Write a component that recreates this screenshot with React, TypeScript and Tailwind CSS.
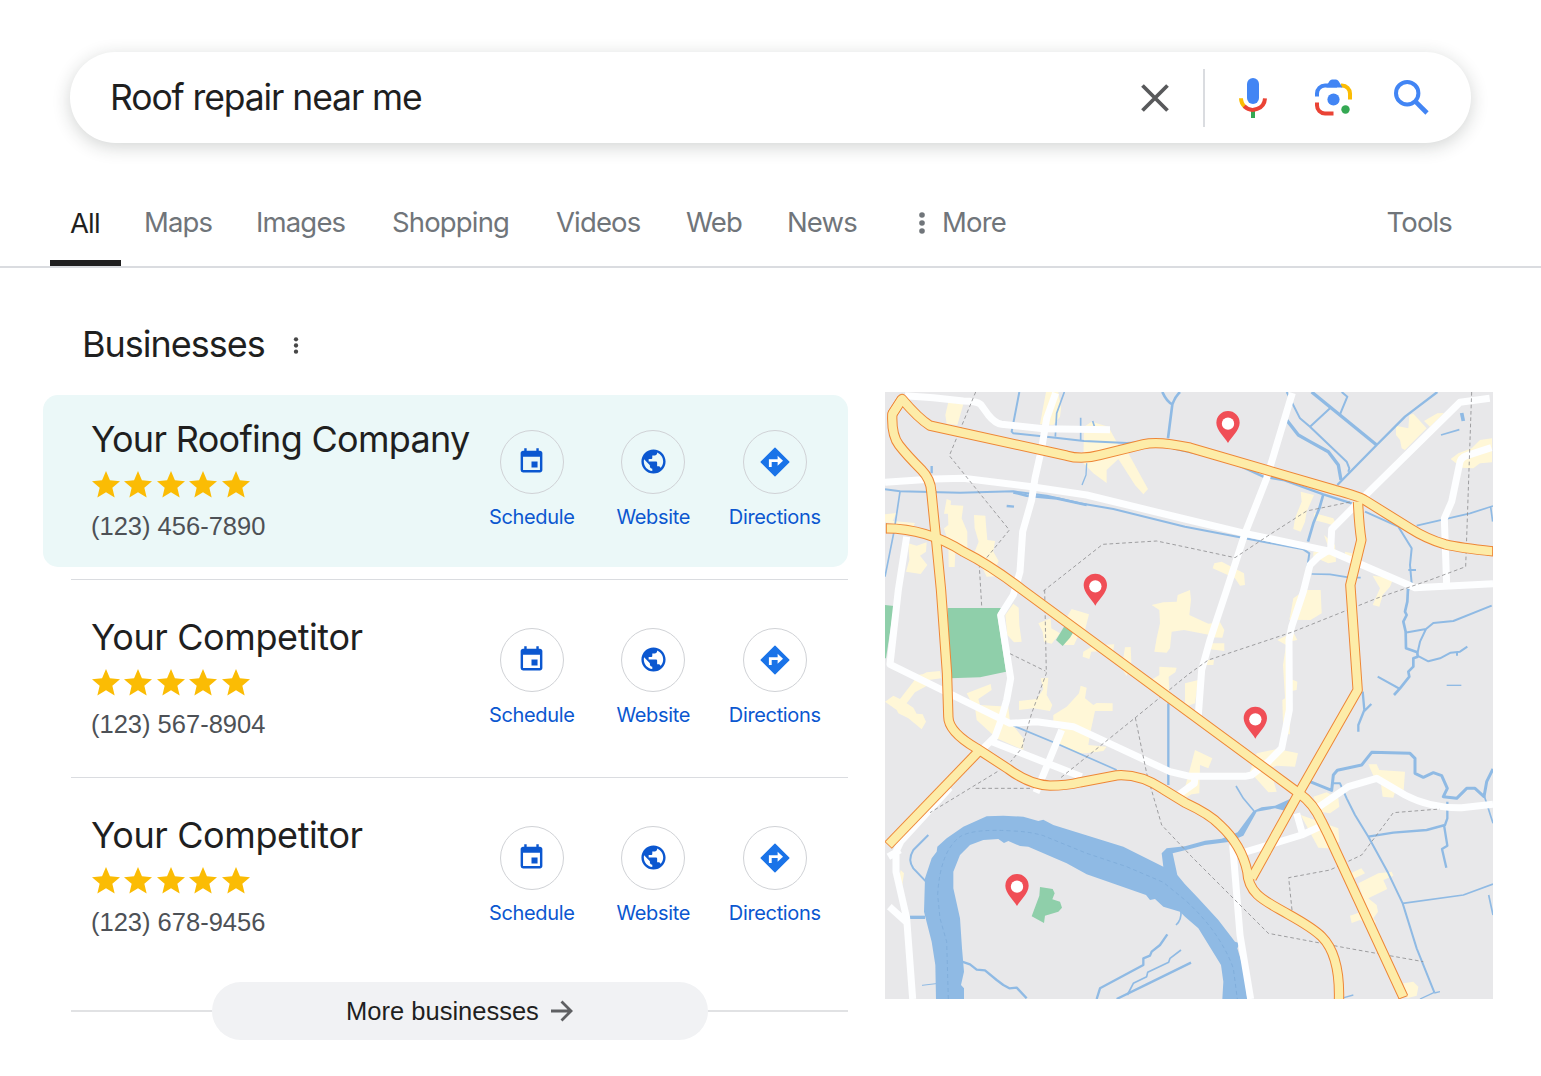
import type { ReactNode } from 'react';
import { MdEvent, MdPublic } from 'react-icons/md';

interface Business {
  name: string;
  phone: string;
  highlighted?: boolean;
}

const BUSINESSES: Business[] = [
  { name: 'Your Roofing Company', phone: '(123) 456-7890', highlighted: true },
  { name: 'Your Competitor', phone: '(123) 567-8904' },
  { name: 'Your Competitor', phone: '(123) 678-9456' },
];

const TABS = [
  { label: 'Maps', width: 'w-[112px]' },
  { label: 'Images', width: 'w-[136px]' },
  { label: 'Shopping', width: 'w-[164px]' },
  { label: 'Videos', width: 'w-[130px]' },
  { label: 'Web', width: 'w-[101px]' },
  { label: 'News', width: 'w-[132px]' },
];

export default function App() {
  return (
    <div className="w-[1541px] h-[1076px] overflow-hidden bg-white pt-[52px] font-['Inter','Liberation_Sans',sans-serif] text-[#1f1f1f]">
      <SearchBar />
      <Tabs />
      <main className="flex">
        <section className="w-[848px] pl-[43px] pt-[54px]">
          <div className="flex items-center h-[44px] pl-[39px] mb-[29px]">
            <h1 className="w-[211px] text-[36px] font-[430] tracking-[-1px] leading-[44px] whitespace-nowrap">Businesses</h1>
            <Dots className="w-[6px] h-[17px] text-[#474747] mt-[3px]" />
          </div>
          {BUSINESSES.map((b, i) => (
            <div key={i}>
              {i > 0 && <div className="h-px bg-[#dadce0] ml-7 mt-3 mb-[13px]" />}
              <BusinessRow business={b} />
            </div>
          ))}
          <div className="flex items-center ml-7 mt-[19px]">
            <div className="w-[141px] h-[2px] bg-[#e1e2e4]" />
            <button className="flex items-center justify-center gap-[11px] w-[496px] h-[58px] rounded-full bg-[#f1f2f4] font-['Liberation_Sans',sans-serif] text-[25.5px]">
              More businesses
              <svg viewBox="0 0 24 22" className="w-6 h-[22px]" fill="none" stroke="#5f6063" strokeWidth="2.8">
                <path d="M1 11h20M11.5 1.5L21 11l-9.5 9.5" />
              </svg>
            </button>
            <div className="flex-1 h-[2px] bg-[#e1e2e4]" />
          </div>
        </section>
        <div className="pl-[37px] pt-[124px]">
          <CityMap />
        </div>
      </main>
    </div>
  );
}

function SearchBar() {
  return (
    <div className="flex items-center mx-[70px] h-[91px] rounded-full bg-white pl-[40px] pr-[42px] shadow-[0_4px_18px_rgba(32,40,36,0.2)]">
      <span className="flex-1 text-[35.5px] tracking-[-1.1px] whitespace-nowrap">Roof repair near me</span>
      <svg viewBox="0 0 28 28" className="w-7 h-7" stroke="#58595b" strokeWidth="3.8">
        <path d="M1.5 1.5l25 25M26.5 1.5l-25 25" />
      </svg>
      <div className="w-[2px] h-[58px] bg-[#dadce0] ml-[34px] mr-[34px]" />
      <svg viewBox="0 0 28 40" className="w-7 h-10 mr-[48px]">
        <rect x="8" y="0" width="12" height="26" rx="6" fill="#4285f4" />
        <rect x="12" y="33" width="4" height="7" fill="#34a853" />
        <path d="M2 20.3a12 12 0 0 0 4 8.7" fill="none" stroke="#fbbc04" strokeWidth="4" />
        <path d="M5.2 28.2A12.2 12.2 0 0 0 26 20.3" fill="none" stroke="#ea4335" strokeWidth="4" />
      </svg>
      <svg viewBox="0 0 37 37" className="w-[37px] h-[37px] mr-[42px]" fill="none" strokeWidth="4">
        <path d="M2 17.5v-3a8 8 0 0 1 8-8h12" stroke="#4285f4" />
        <path d="M26 6.5h1a8 8 0 0 1 8 8v6" stroke="#fbbc04" />
        <path d="M11.5 7L14.500 2Q15.500 .5 17 .5h4q1.500 0 2.500 1.500L27.500 8.500h-16z" fill="#4285f4" />
        <path d="M2 23.5v3a8 8 0 0 0 8 8h8.500" stroke="#ea4335" />
        <circle cx="18.500" cy="20.500" r="6.100" fill="#4285f4" />
        <circle cx="30.500" cy="30.500" r="4.200" fill="#34a853" />
      </svg>
      <svg viewBox="0 0 35 35" className="w-[35px] h-[35px]" fill="none" stroke="#4285f4" strokeWidth="4">
        <circle cx="13.200" cy="13.200" r="11.200" />
        <path d="M21.800 21.800L33 33" strokeWidth="4.600" />
      </svg>
    </div>
  );
}

function Tabs() {
  return (
    <nav className="flex h-[125px] pl-[50px] pt-[52px] border-b-2 border-[#dadce0] text-[27.5px] leading-[55px] font-[430] tracking-[-0.85px] text-[#70757a]">
      <div className="flex flex-col w-[94px]">
        <span className="flex-1 pl-5 leading-[56px] text-[#1f1f1f]">All</span>
        <div className="w-[71px] h-[6px] bg-[#1f1f1f]" />
      </div>
      {TABS.map((t) => (
        <span key={t.label} className={t.width}>{t.label}</span>
      ))}
      <Dots className="w-[6px] h-[22px] mt-[17px]" />
      <span className="pl-[17px]">More</span>
      <span className="ml-auto mr-[89px]">Tools</span>
    </nav>
  );
}

function Dots({ className }: { className: string }) {
  return (
    <svg viewBox="0 0 6 22" className={className} fill="currentColor">
      <circle cx="3" cy="3" r="2.800" />
      <circle cx="3" cy="11" r="2.800" />
      <circle cx="3" cy="19" r="2.800" />
    </svg>
  );
}

function BusinessRow({ business }: { business: Business }) {
  return (
    <div className={`flex justify-between h-[172px] rounded-[15px] pl-[48px] pr-[12.5px] ${business.highlighted ? 'bg-[#ebf8f8]' : ''}`}>
      <div className="pt-[21px]">
        <h2 className={`text-[36px] leading-[46px] whitespace-nowrap ${business.highlighted ? 'tracking-[-0.7px]' : 'tracking-[-0.400px]'}`}>{business.name}</h2>
        <div className="flex gap-[4.400px] mt-[9px] pl-px">
          {[1, 2, 3, 4, 5].map((n) => (
            <svg key={n} viewBox="2 2 20 19" className="w-[28px] h-[26.600px]" fill="#fbbc04">
              <path d="M12 17.270L18.180 21l-1.640-7.030L22 9.240l-7.190-.61L12 2 9.190 8.630 2 9.240l5.460 4.730L5.820 21z" />
            </svg>
          ))}
        </div>
        <p className="mt-[12px] font-['Liberation_Sans',sans-serif] text-[25.500px] leading-[32px] text-[#4d5156]">{business.phone}</p>
      </div>
      <div className="flex pt-[34.500px]">
        <Action label="Schedule"><MdEvent size={29} /></Action>
        <Action label="Website"><MdPublic size={29} /></Action>
        <Action label="Directions"><DirectionsIcon /></Action>
      </div>
    </div>
  );
}

function Action({ label, children }: { label: string; children: ReactNode }) {
  return (
    <div className="flex flex-col items-center w-[121.500px] text-[#0b57d0]">
      <div className="flex items-center justify-center w-16 h-16 rounded-full border border-[#d0d2d6]">{children}</div>
      <span className="mt-[10px] text-[20px] leading-[26px] tracking-[-0.350px]">{label}</span>
    </div>
  );
}

function DirectionsIcon() {
  return (
    <svg viewBox="0 0 30 30" className="w-[30px] h-[30px]">
      <path d="M15 1.200L28.800 15 15 28.800 1.200 15z" fill="#1a73e8" stroke="#1a73e8" strokeWidth="1.400" strokeLinejoin="round" />
      <path d="M10.300 20v-6.300h8" fill="none" stroke="#fff" strokeWidth="2.800" />
      <path d="M17.600 8.700l5.400 5-5.400 5z" fill="#fff" />
    </svg>
  );
}

const FIELDS = [
  'M205 52L250 58L232 120L200 116L196 90Z',
  'M498 21L535 21L543 70L540 95L520 120L480 118Z',
  'M612 125L635 110L685 125L715 180L745 205L804 312L790 328L765 300L715 222L680 255V294L640 265L610 235Z',
  'M200 342L213 347L212 360L250 362L245 400L262 440L262 485L268 505L250 515L226 500L224 546H206L205 475L192 430L205 420L204 386H192Z',
  'M282 390L316 392L318 420L322 465L345 468L340 500L356 528L348 545L352 574L320 575L284 500L296 470L284 430Z',
  'M15 388L50 384L38 408L105 414L100 425L15 412Z',
  'M85 475L110 482L140 472L138 500L120 512L142 540L122 567L78 560L88 525Z',
  'M400 656L416 668L418 720L425 770L402 772L382 750L376 690Z',
  'M475 715L512 700L514 730L540 745L515 776L492 770L488 740Z',
  'M575 672L627 688L615 735L598 745L582 780L552 780L575 740L555 705Z',
  'M610 800L640 782L665 780L703 778L700 795L634 800L628 822L608 815Z',
  'M735 787L752 786L754 830L740 873L725 850Z',
  'M815 660L850 652L890 650L893 630L930 615L933 645L928 690L985 716L1020 712L1033 735L1027 758L995 757L990 750L912 735L875 740L870 790L860 803L823 800L830 760L840 715L838 675Z',
  'M838 845L890 848L886 862L866 875L868 920L805 890L838 870Z',
  'M15 950L40 932L60 942L100 890L112 870L128 868L140 862L180 858L184 880L150 884L145 900L105 922L80 955L100 968L110 986L128 988L138 1010L125 1033L85 1000L55 985L50 975Z',
  'M260 925L332 897L335 915L295 942L300 960L385 965L390 1010L430 1060L430 1095L350 1060L290 1005L286 975Z',
  'M482 880L505 878L500 930L517 960L510 978L460 970L417 975V948L470 942L490 912Z',
  'M520 990L560 965L597 925L602 902L620 908L615 940L640 960L650 954L698 955V978L645 978L632 1038L625 1080L680 1085L670 1098L618 1105L590 1105L540 1080L535 1045L545 1025L520 1010Z',
  'M1003 535L1025 530L1092 565L1095 600L1080 602L1065 580L998 550Z',
  'M1262 320L1302 330L1280 380L1275 410L1262 440L1240 432L1245 400L1265 350Z',
  'M1302 384L1360 400L1372 425L1340 415L1302 405Z',
  'M1332 450L1365 480L1368 530L1345 535L1300 515L1300 500L1350 500Z',
  'M1395 500L1440 510L1430 525L1395 520Z',
  'M1478 572L1540 580L1530 605L1508 630L1498 665L1478 660L1500 610Z',
  'M1548 122L1585 130L1588 90L1600 86L1640 130L1575 195L1565 190L1560 165L1548 150Z',
  'M1632 108L1672 85L1692 84L1650 125Z',
  'M1712 222L1735 205L1775 190L1800 165L1836 160V232L1800 235L1780 250L1745 248Z',
  'M1275 615L1322 615L1325 685L1292 705L1228 704L1232 685L1240 640Z',
  'M1192 765L1240 742L1252 765L1225 770L1228 880L1252 890L1250 915L1225 920L1230 1048L1210 1048L1207 945L1215 940L1209 840L1218 780Z',
  'M985 775L1033 775V798L985 792Z',
  'M970 825L1002 825L1000 840L968 840Z',
  'M915 895L955 885L945 955L915 965Z',
  'M1130 1105L1192 1092L1254 1105L1245 1145L1190 1142L1170 1150L1190 1220L1165 1222L1110 1160Z',
  'M945 1095L997 1120L985 1150L960 1140L958 1225L935 1228L905 1245Z',
  'M1465 1138L1490 1138L1498 1155L1575 1160L1570 1230L1545 1222L1540 1238L1508 1235L1502 1190L1480 1172Z',
  'M1300 1235L1340 1222L1375 1240L1378 1265L1350 1285L1320 1280Z',
  'M1262 1290L1375 1330L1378 1370L1345 1390L1315 1388Z',
  'M1412 1465L1444 1450L1455 1465L1420 1482Z',
  'M1435 1495L1495 1465L1535 1460L1540 1472L1510 1485L1522 1512L1465 1540L1490 1560L1494 1580L1480 1600L1488 1612L1472 1620L1440 1605L1415 1614L1410 1592L1460 1575Z',
  'M1570 1795L1600 1790L1615 1805L1610 1832L1580 1840Z',
  'M62 1455L72 1465L66 1505L58 1480Z',
];

const PARKS = [
  'M203 669H363L352 690L378 860L300 877L210 880Z',
  'M15 660L42 663L18 820H15Z',
  'M528 765L552 725L580 742L570 758L548 783Z',
  'M480 1506L518 1512L524 1525L517 1543L540 1550L546 1568L535 1580L495 1592L492 1614L455 1594L478 1532Z',
];

const RIVER =
  'M168 1842L166 1740L155 1670L132 1580L135 1480L155 1420L170 1400L172 1385L200 1360L250 1325L320 1294L370 1292L430 1295L475 1308L490 1304L520 1320L730 1385L850 1445L845 1405L860 1390L915 1384L975 1367L1025 1361L1073 1342L1120 1278L1145 1267L1185 1262L1235 1240L1245 1245L1218 1278L1185 1270L1130 1280L1090 1352L1045 1371L975 1380L930 1392L878 1405L892 1470L915 1498L955 1540L1015 1605L1065 1670L1080 1675L1072 1690L1090 1750L1102 1842H1027L1030 1790L1023 1740L955 1630L915 1595L900 1580L850 1565L825 1542L810 1545L798 1530L620 1468L560 1435L445 1385L420 1383L385 1368L372 1374L355 1362L310 1365L270 1380L240 1410L220 1460V1510L240 1600L246 1690L252 1760L243 1800L252 1810V1842Z';

// [path, stroke width]
const STREAMS: [string, number][] = [
  ['M418 21L395 140L400 145L500 155L612 168L740 174L780 172', 6],
  ['M553 21L530 85L526 155M602 98V165M638 108L645 130', 5],
  ['M847 21Q860 50 877 58Q885 35 900 21M877 58L864 160', 8],
  ['M880 190L1040 225L1150 275L1210 285L1330 328L1415 355', 7],
  ['M15 313L60 319L240 323L400 319L500 332L600 355L700 372L915 425L1095 460L1270 493L1288 505L1280 560', 6],
  ['M400 322L440 332L530 340L620 360', 8],
  ['M60 320L42 440L15 575', 5],
  ['M155 243V265M380 363L402 365', 7],
  ['M620 235L618 270L606 300', 4],
  ['M1220 21L1260 100L1290 125L1400 230L1408 250L1405 260', 6],
  ['M1220 105L1255 150L1290 170L1345 200L1375 240L1383 285', 10],
  ['M1295 21L1490 180', 10],
  ['M1350 70L1290 125M1385 21L1402 35L1380 88', 6],
  ['M1672 21L1575 95L1490 180L1372 300', 7],
  ['M1330 328L1318 370L1300 415L1284 470', 8],
  ['M1455 380L1555 425L1595 490L1590 540L1595 595L1585 615M1585 555H1608', 6],
  ['M1610 422L1770 385L1839 363M1832 366L1838 410', 5],
  ['M1745 84L1750 108', 11],
  ['M1683 150L1738 134', 5],
  ['M1295 567L1350 568L1405 577L1442 578', 5],
  ['M1584 610L1582 650L1575 680L1580 690L1570 710L1577 740L1578 790L1612 802L1613 815L1600 820V845L1585 860L1588 875L1560 910L1542 930', 8],
  ['M1493 875L1560 912M1613 802L1620 770L1638 732L1660 714L1720 708L1835 662M1575 743L1638 732', 6],
  ['M1612 812L1645 829L1680 820L1712 803L1740 800L1762 785M1731 800V812', 6],
  ['M1700 901H1744', 4],
  ['M1448 920L1453 975L1435 1020V1040M1453 978L1474 957', 7],
  ['M1290 1190L1355 1216L1360 1170L1372 1156L1445 1140L1475 1102L1590 1105L1605 1120V1165L1630 1177L1660 1163L1685 1172L1702 1210L1690 1235L1730 1240L1760 1210H1785L1812 1235L1820 1190L1839 1152', 9],
  ['M1355 1195H1380L1400 1240L1425 1290L1465 1355L1525 1465L1568 1555L1610 1690L1663 1822', 6],
  ['M1465 1355L1540 1343L1640 1335L1695 1320L1702 1300V1250M1692 1320L1702 1382L1686 1392L1699 1448', 7],
  ['M1812 1230L1839 1315M1568 1555L1750 1530L1839 1497M1826 1530L1839 1590', 5],
  ['M1663 1822L1620 1842M1663 1824L1680 1820M1392 1838L1420 1830', 4],
  ['M865 955V1200', 7],
  ['M400 1022L540 1080L710 1155', 5],
  ['M1068 1203L1090 1240L1122 1278', 5],
  ['M145 1350L100 1395Q82 1425 100 1450L138 1490', 6],
  ['M90 1597H135', 10],
  ['M126 1801L168 1796', 3],
  ['M246 1730L270 1738L290 1754L315 1756L350 1785L370 1800L388 1810L410 1808L440 1840', 7],
  ['M862 1648L840 1680L815 1700L810 1712L790 1720V1740L660 1810L650 1842', 7],
  ['M903 1695L870 1720L866 1732L803 1762L800 1775L760 1795L742 1830', 5],
  ['M710 1842L800 1798L933 1733', 7],
  ['M903 1578Q905 1605 888 1620', 5],
];

const BORDERS = [
  'M287 21L208 212L388 435L298 545L305 662',
  'M490 618L668 478L830 468L930 489L1065 518L1175 445L1280 378L1415 350',
  'M494 615L499 865L455 985L425 1090L392 1130',
  'M390 806L496 858',
  'M1775 21L1757 545L1650 585L1490 640L1240 740L985 825L925 868L766 998L540 1180',
  'M766 998L800 1165L845 1320L935 1415L1165 1645L1405 1690L1630 1730',
  'M287 1210H450M352 1160L150 1283',
  'M1236 1575L1226 1478L1350 1455L1445 1410L1540 1283L1680 1272',
];

const STREETS = [
  'M75 32L160 38L250 48Q290 48 302 58L325 90Q345 115 365 118L490 131L690 134',
  'M527 24L500 100L485 190L465 280L455 345L428 440L420 560L400 630L362 690L392 880L380 945L360 1015L345 1055L305 1095',
  'M15 292L160 282L250 280L455 305L620 330L915 402L1095 445L1355 500L1605 608L1839 596',
  'M1237 24L1160 280L1095 445L1040 615L990 765L965 855L955 990',
  'M1829 40L1740 52L1455 332L1355 433L1352 492L1315 515L1290 540L1270 620L1235 725L1227 765L1228 975L1205 1090L1165 1130L1115 1170L1095 1174L930 1174L870 1160L580 1025L470 1010L390 1015L30 838L55 615L80 455',
  'M1834 188L1760 212Q1740 218 1738 240L1715 350L1693 400L1700 600',
  'M330 1068L605 1175M545 1035L468 1223',
  'M895 1230L943 1195L945 1173',
  'M1310 1270L1405 1205L1490 1180L1575 1230Q1650 1270 1745 1268L1839 1258',
  'M1060 1412L1265 1350L1320 1325M1250 1285L1267 1345',
  'M1058 1380L1080 1650L1112 1842',
  'M210 1208L62 1370L48 1400V1460L80 1600L98 1842M25 1415L60 1395M28 1565L80 1612',
];

const HIGHWAYS = [
  'M66 42L37 87Q34 150 57 180T125 255Q152 283 154 320L168 460L183 615L201 865L205 995Q205 1040 290 1090L385 1152Q450 1200 510 1202Q560 1202 600 1192L710 1171Q780 1166 850 1213L915 1253Q990 1288 1020 1320Q1085 1380 1102 1460C1105 1530 1160 1550 1225 1588Q1300 1630 1325 1655Q1380 1710 1377 1842',
  'M37 87L66 42Q115 100 150 122L560 212Q605 225 660 210L790 178Q835 167 930 188L1365 315Q1440 335 1455 346L1590 430Q1640 462 1695 478Q1740 489 1839 499',
  'M18 430Q140 430 250 500Q330 540 428 615L1260 1227Q1300 1255 1325 1310L1345 1350L1570 1836',
  'M295 1100L25 1380',
  'M1434 350Q1437 420 1444 465L1411 600L1433 915L1255 1227L1115 1480',
];

// Orange caps where a highway stops inside the frame
const HIGHWAY_CAPS = 'M19 415V445M15 1370L36 1390M1556 1842L1583 1832M1838 484V514';

const PINS = [
  [1044, 174],
  [646, 662],
  [1126, 1061],
  [411, 1563],
];

function CityMap() {
  return (
    <svg viewBox="15 21 1824 1821" className="block w-[608px] h-[607px] bg-[#e8e8ea]" fill="none">
      <g fill="#fff7d7">{FIELDS.map((d) => <path key={d} d={d} />)}</g>
      <g fill="#8fcfaa">{PARKS.map((d) => <path key={d} d={d} />)}</g>
      <path d={RIVER} fill="#8fbae4" />
      <path
        d="M205 1842L200 1670L180 1600L173 1530Q180 1400 240 1355Q280 1330 400 1338Q450 1340 490 1352L620 1405L740 1445L850 1492L915 1545Q1020 1640 1060 1750L1072 1842"
        stroke="#79a7d6"
        strokeWidth="2"
        strokeDasharray="12 9"
      />
      <g stroke="#8fbae4" strokeLinejoin="round">
        {STREAMS.map(([d, w]) => <path key={d} d={d} strokeWidth={w} />)}
      </g>
      <g stroke="#fdfeff" strokeWidth="21" strokeLinejoin="round">
        {STREETS.map((d) => <path key={d} d={d} />)}
      </g>
      <g stroke="#8e8e90" strokeWidth="2.500" strokeDasharray="11 8">
        {BORDERS.map((d) => <path key={d} d={d} />)}
      </g>
      <g stroke="#ee8636" strokeWidth="31" strokeLinejoin="round">
        {HIGHWAYS.map((d) => <path key={d} d={d} />)}
      </g>
      <g stroke="#fdeca8" strokeWidth="25" strokeLinejoin="round">
        {HIGHWAYS.map((d) => <path key={d} d={d} />)}
      </g>
      <path d={HIGHWAY_CAPS} stroke="#ee8636" strokeWidth="3" />
      {PINS.map(([x, y]) => (
        <g key={x} transform={`translate(${x} ${y})`}>
          <path d="M0 0C-10 -18 -35 -38 -35 -61A35 35 0 0 1 35 -61C35 -38 10 -18 0 0Z" fill="#f04e56" />
          <circle cy="-58" r="18.500" fill="#fff" />
        </g>
      ))}
    </svg>
  );
}
